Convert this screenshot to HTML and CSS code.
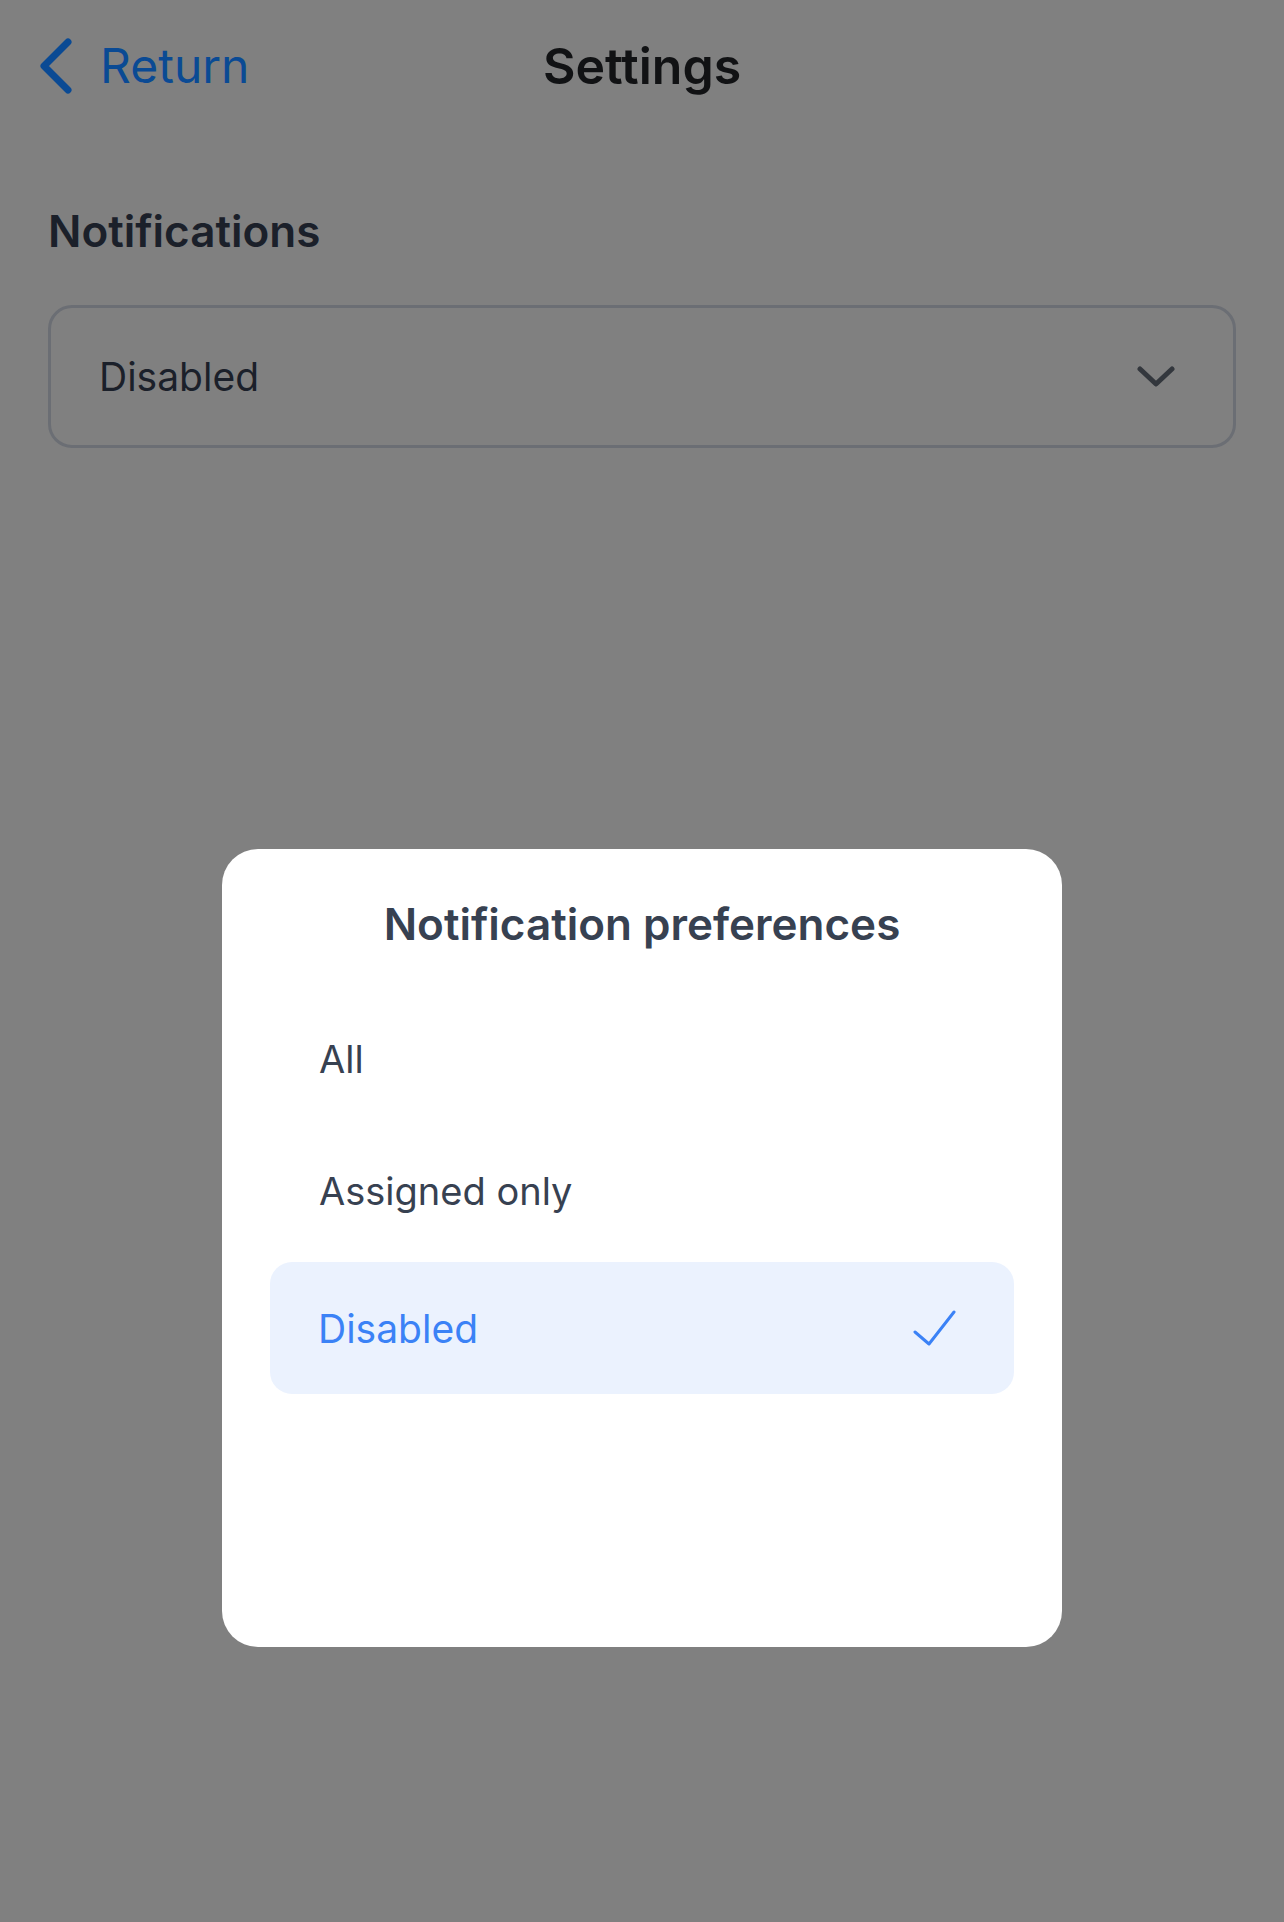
FILE: index.html
```html
<!DOCTYPE html>
<html>
  <head>
    <title>Settings</title>
    <meta name="viewport" content="width=device-width, initial-scale=1.0" />
    <link rel="stylesheet" href="styles.css">
  </head>
  <body>
    <div class="page">
      <header class="topbar">
        <a class="back-link" href="#">
          <svg class="back-icon" width="32" height="56" viewBox="0 0 32 56">
            <path d="M28 4 L4 28 L28 52" />
          </svg>
          <span>Return</span>
        </a>
        <h1 class="topbar-title">Settings</h1>
        <div></div>
      </header>

      <section class="content">
        <h2 class="section-label">Notifications</h2>
        <div class="select-box">
          <span class="select-value">Disabled</span>
          <svg class="select-icon" width="38" height="21" viewBox="0 0 38 21">
            <path d="M3 3 L19 18 L35 3" />
          </svg>
        </div>
      </section>
    </div>

    <!-- picker sheet shown over the dimmed page -->
    <div class="overlay">
      <div class="modal">
        <h3 class="modal-title">Notification preferences</h3>
        <ul class="option-list">
          <li class="option">All</li>
          <li class="option">Assigned only</li>
          <li class="option selected">
            <span>Disabled</span>
            <svg class="check-icon" width="44" height="36" viewBox="0 0 44 36">
              <path d="M2 22 L16 34 L41 2" />
            </svg>
          </li>
        </ul>
      </div>
    </div>
  </body>
</html>
```

FILE: styles.css
```css
body {
  font-family: Inter, "Noto Sans", sans-serif;
  background: #808080;
  margin: 0;
  padding: 0;
  min-height: 1922px;
}
.page {
  width: 1284px;
}
.topbar {
  display: grid;
  grid-template-columns: 1fr auto 1fr;
  align-items: center;
  height: 132px;
  padding: 0 40px;
}
.back-link {
  display: flex;
  align-items: center;
  gap: 28px;
  color: #0a4a94;
  text-decoration: none;
  font-size: 48px;
  line-height: 60px;
}
.back-icon path {
  fill: none;
  stroke: #0a4a94;
  stroke-width: 7;
  stroke-linecap: round;
  stroke-linejoin: round;
}
.topbar-title {
  margin: 0;
  font-size: 50px;
  line-height: 60px;
  font-weight: 600;
  color: #111214;
}
.content {
  padding: 73px 48px 0 48px;
}
.section-label {
  margin: 0 0 48px 0;
  font-size: 44px;
  line-height: 52px;
  font-weight: 600;
  color: #1b202a;
}
.select-box {
  display: flex;
  align-items: center;
  justify-content: space-between;
  height: 143px;
  box-sizing: border-box;
  border: 3px solid #6b6e74;
  border-radius: 24px;
  padding: 0 58px 0 48px;
}
.select-value {
  font-size: 39px;
  color: #1b202a;
}
.select-icon path {
  fill: none;
  stroke: #33373d;
  stroke-width: 5;
  stroke-linecap: round;
  stroke-linejoin: round;
}
.overlay {
  position: fixed;
  inset: 0;
  display: flex;
  justify-content: center;
  align-items: flex-start;
  padding-top: 849px;
}
.modal {
  background: #fff;
  width: 840px;
  min-height: 798px;
  box-sizing: border-box;
  border-radius: 36px;
  padding: 49px 48px;
}
.modal-title {
  margin: 0 0 43px 0;
  text-align: center;
  font-size: 44px;
  line-height: 52px;
  font-weight: 600;
  color: #374151;
}
.option-list {
  list-style: none;
  margin: 0;
  padding: 0;
  display: flex;
  flex-direction: column;
}
.option {
  display: flex;
  align-items: center;
  justify-content: space-between;
  height: 132px;
  padding: 0 57px 0 49px;
  border-radius: 22px;
  font-size: 38px;
  color: #374151;
}
.option.selected {
  margin-top: 5px;
  background: #ebf2fe;
  color: #3b82f6;
  font-size: 39px;
  padding-left: 48px;
}
.check-icon path {
  fill: none;
  stroke: #3b82f6;
  stroke-width: 3;
  stroke-linecap: round;
  stroke-linejoin: round;
}
```
